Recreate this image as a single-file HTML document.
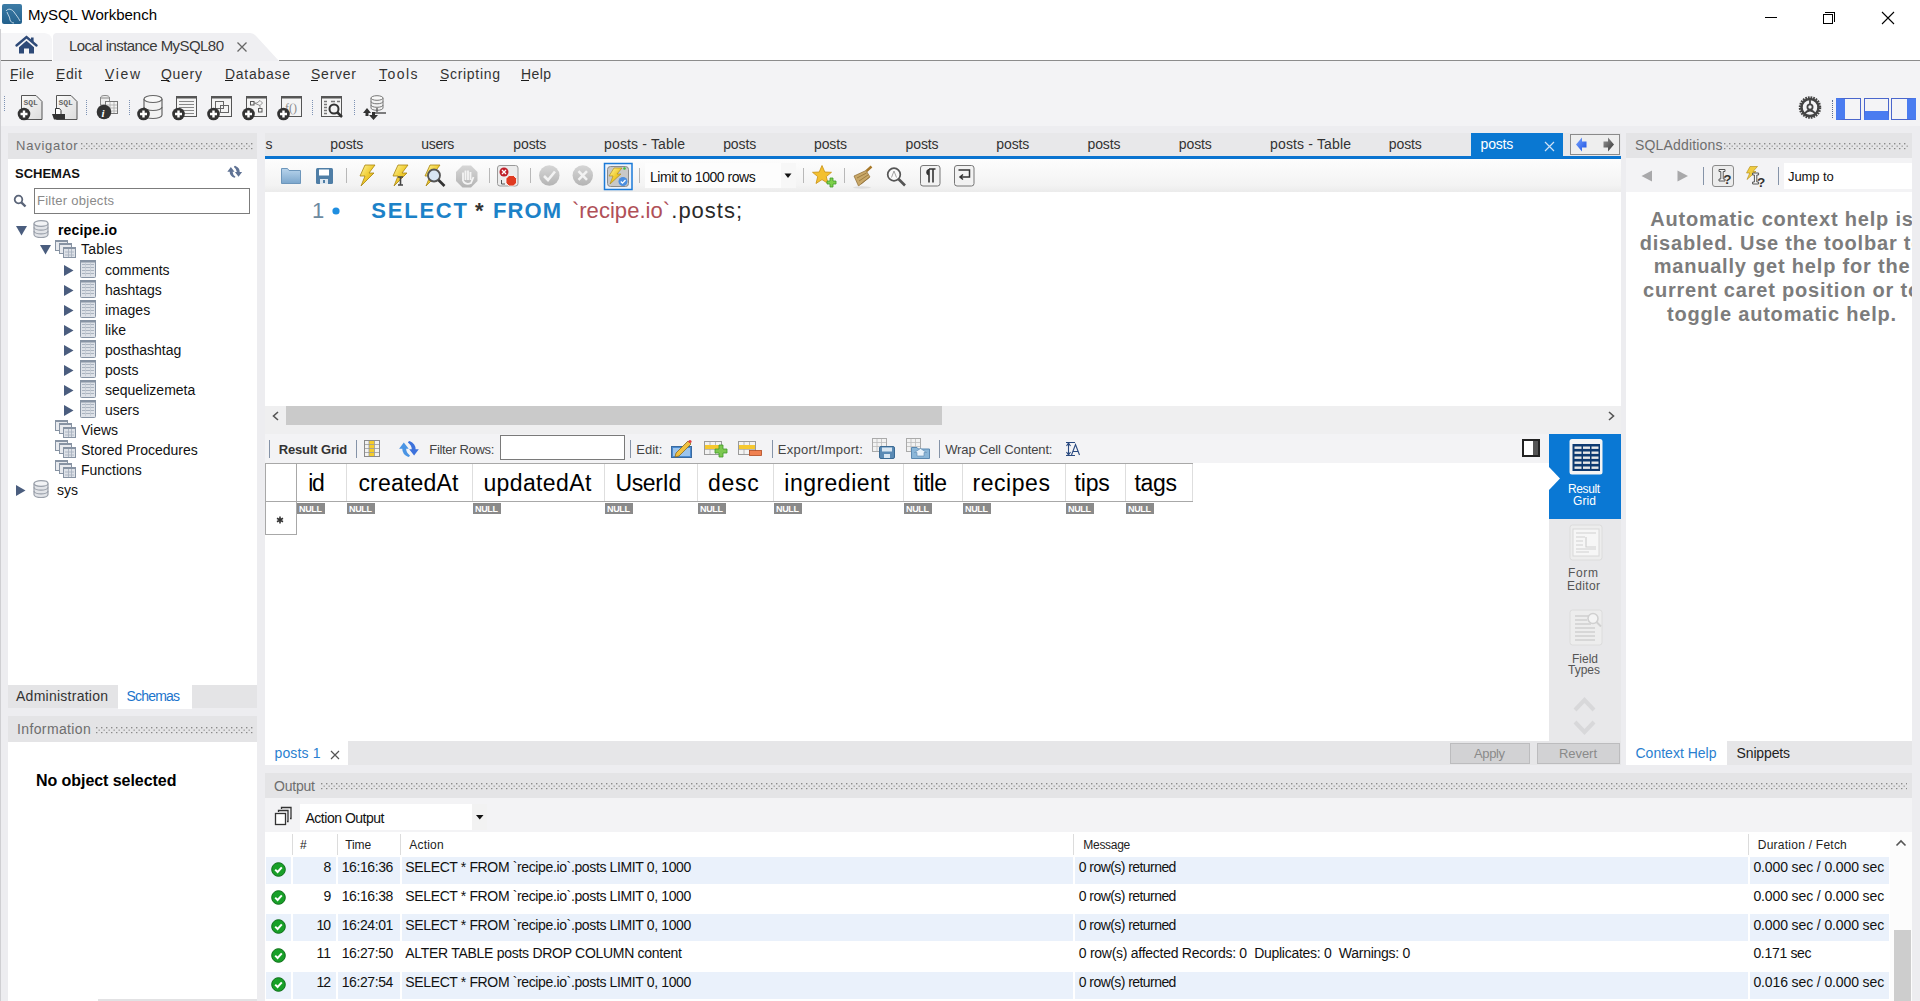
<!DOCTYPE html>
<html><head><meta charset="utf-8">
<style>
*{margin:0;padding:0;box-sizing:border-box}
html,body{width:1920px;height:1001px;overflow:hidden;background:#ededf0;font-family:"Liberation Sans",sans-serif;color:#000;position:relative}
.a{position:absolute}
.t{position:absolute;white-space:nowrap;line-height:1}
svg{position:absolute;overflow:visible}
</style></head><body>
<!-- title bar -->
<div class="a" style="left:0;top:0;width:1920px;height:61px;background:#fff"></div>
<svg class="a" style="left:2px;top:4px" width="21" height="21" viewBox="0 0 21 21"><defs><linearGradient id="lg1" x1="0" y1="0" x2="0" y2="1"><stop offset="0" stop-color="#3d7ca6"/><stop offset="1" stop-color="#23618d"/></linearGradient></defs><rect x="0" y="0" width="20" height="20" rx="2" fill="url(#lg1)"/><path d="M4 7 C6 4 10 5 12 8 C14 11 16 13 18 17 M5 8 C6 11 8 13 8 16 C9 18 10 19 12 19" stroke="#cfe0ec" stroke-width="0.9" fill="none"/></svg>
<div class="a" style="left:1765px;top:17px;width:12px;height:1px;background:#000"></div>
<div class="a" style="left:1823px;top:14px;width:10px;height:10px;border:1px solid #000"></div>
<div class="a" style="left:1825px;top:12px;width:10px;height:10px;border-top:1px solid #000;border-right:1px solid #000"></div>
<svg class="a" style="left:1881px;top:11px" width="14" height="14" viewBox="0 0 14 14"><path d="M1 1L13 13M13 1L1 13" stroke="#000" stroke-width="1.1"/></svg>
<!-- tab row -->
<svg class="a" style="left:0;top:33px" width="290" height="28"><path d="M0 0 H44 Q50 0 52 6 L52 27 H0Z" fill="#f5f5f7"/><path d="M53 28 V4 Q53 0 57 0 H250 Q254 0 257 4 L279 28Z" fill="#efeff2"/></svg>
<svg class="a" style="left:15px;top:35px" width="23" height="20" viewBox="0 0 23 20"><path d="M1.5 10.5L11.5 2L21.5 10.5" fill="none" stroke="#2e4a78" stroke-width="2.4" stroke-linecap="round"/><rect x="16" y="2.5" width="2.6" height="4.5" fill="#2e4a78"/><path d="M4 12.2L11.5 5.8L19 12.2V18.5H14V13.5H9V18.5H4Z" fill="#2e4a78"/></svg>
<svg class="a" style="left:236px;top:41px" width="12" height="12" viewBox="0 0 12 12"><path d="M1.5 1.5L10.5 10.5M10.5 1.5L1.5 10.5" stroke="#666" stroke-width="1.3"/></svg>
<div class="a" style="left:0;top:60px;width:52px;height:1px;background:#7a7a7a"></div>
<div class="a" style="left:279px;top:60px;width:1641px;height:1px;background:#8c8c8c"></div>
<!-- menu -->
<div class="a" style="left:0;top:61px;width:1920px;height:65px;background:#f3f3f5"></div>
<!-- toolbar -->
<svg class="a" style="left:0;top:88px" width="400" height="38" viewBox="0 0 400 38">
 <defs><linearGradient id="docg" x1="0" y1="0" x2="1" y2="1"><stop offset="0" stop-color="#fafafa"/><stop offset="1" stop-color="#dcdcdc"/></linearGradient>
 <g id="plus"><circle cx="0" cy="0" r="6.3" fill="#333"/><path d="M-3.5 0H3.5M0 -3.5V3.5" stroke="#fff" stroke-width="2.4"/></g></defs>
 <g fill="#7d92b4"><rect x="4" y="8" width="1" height="1"/><rect x="4" y="10" width="1" height="1"/><rect x="4" y="12" width="1" height="1"/><rect x="4" y="14" width="1" height="1"/><rect x="4" y="16" width="1" height="1"/><rect x="4" y="18" width="1" height="1"/><rect x="4" y="20" width="1" height="1"/><rect x="4" y="22" width="1" height="1"/></g>
 <path d="M21.5 7.5H36L42 13.5V31.5H21.5Z" fill="url(#docg)" stroke="#555" stroke-width="1"/>
 <text x="23.5" y="17" font-family="Liberation Mono" font-size="8" font-weight="bold" fill="#666">SQL</text>
 <g transform="translate(24 26)"><circle cx="0" cy="0" r="6.3" fill="#333"/><path d="M-3.5 0H3.5M0 -3.5V3.5" stroke="#fff" stroke-width="2.4"/></g>
 <path d="M56.5 7.5H71L77 13.5V31.5H56.5Z" fill="url(#docg)" stroke="#555" stroke-width="1"/>
 <text x="58.5" y="17" font-family="Liberation Mono" font-size="8" font-weight="bold" fill="#666">SQL</text>
 <path d="M55.5 20.5H59.5L61 22.5V27H55.5Z" fill="#fff" stroke="#333" stroke-width="1"/><path d="M52 26H65V31.5H54Z" fill="#333"/>
 <g fill="#7d92b4"><rect x="86" y="12" width="1" height="1"/><rect x="86" y="14" width="1" height="1"/><rect x="86" y="16" width="1" height="1"/><rect x="86" y="18" width="1" height="1"/><rect x="86" y="20" width="1" height="1"/><rect x="86" y="22" width="1" height="1"/><rect x="86" y="24" width="1" height="1"/><rect x="86" y="26" width="1" height="1"/></g>
 <ellipse cx="105" cy="10" rx="4.5" ry="2.5" fill="#eee" stroke="#888"/><rect x="100.5" y="10" width="9" height="7" fill="#eee" stroke="#888"/>
 <rect x="105.5" y="13.5" width="12" height="12" fill="#f4f4f4" stroke="#777"/><path d="M106 17H117M106 20H117M106 23H117M110 14V25M114 14V25" stroke="#aaa" stroke-width="0.8"/>
 <circle cx="104" cy="24" r="7.3" fill="#333"/><text x="101.5" y="29" font-family="Liberation Serif" font-style="italic" font-weight="bold" font-size="11" fill="#fff">i</text>
 <g fill="#7d92b4"><rect x="129" y="12" width="1" height="1"/><rect x="129" y="14" width="1" height="1"/><rect x="129" y="16" width="1" height="1"/><rect x="129" y="18" width="1" height="1"/><rect x="129" y="20" width="1" height="1"/><rect x="129" y="22" width="1" height="1"/><rect x="129" y="24" width="1" height="1"/><rect x="129" y="26" width="1" height="1"/></g>
 <path d="M144 11 V27 A9 3.5 0 0 0 162 27 V11" fill="#f2f2f2" stroke="#666" stroke-width="1.2"/><ellipse cx="153" cy="11" rx="9" ry="3.5" fill="#f8f8f8" stroke="#666" stroke-width="1.2"/><path d="M144 19 A9 3.5 0 0 0 162 19" fill="none" stroke="#666" stroke-width="1.2"/>
 <g transform="translate(143.5 26)"><circle cx="0" cy="0" r="6.3" fill="#333"/><path d="M-3.5 0H3.5M0 -3.5V3.5" stroke="#fff" stroke-width="2.4"/></g>
 <rect x="176.5" y="8.5" width="20" height="20" fill="#f4f4f4" stroke="#555"/><rect x="176" y="8" width="21" height="2.5" fill="#555"/><path d="M179 13.5H194M179 16.5H194M179 19.5H194M179 22.5H194M179 25.5H194" stroke="#888" stroke-width="1.2"/>
 <g transform="translate(178.5 26)"><circle cx="0" cy="0" r="6.3" fill="#333"/><path d="M-3.5 0H3.5M0 -3.5V3.5" stroke="#fff" stroke-width="2.4"/></g>
 <rect x="211.5" y="8.5" width="20" height="20" fill="#f4f4f4" stroke="#555"/><rect x="211" y="8" width="21" height="2.5" fill="#555"/><rect x="215.5" y="13.5" width="8" height="7" fill="none" stroke="#666"/><rect x="220.5" y="17.5" width="8" height="7" fill="none" stroke="#666"/>
 <g transform="translate(213.5 26)"><circle cx="0" cy="0" r="6.3" fill="#333"/><path d="M-3.5 0H3.5M0 -3.5V3.5" stroke="#fff" stroke-width="2.4"/></g>
 <rect x="246.5" y="8.5" width="20" height="20" fill="#f4f4f4" stroke="#555"/><rect x="246" y="8" width="21" height="2.5" fill="#555"/><rect x="250.5" y="13.5" width="3.5" height="3.5" fill="none" stroke="#555"/><rect x="258.5" y="20.5" width="3.5" height="3.5" fill="none" stroke="#555"/><path d="M254 15H257L260 12.5L262.5 15L260 17.5Z M260 17.5V20.5" fill="none" stroke="#777" stroke-width="0.8"/>
 <g transform="translate(248.5 26)"><circle cx="0" cy="0" r="6.3" fill="#333"/><path d="M-3.5 0H3.5M0 -3.5V3.5" stroke="#fff" stroke-width="2.4"/></g>
 <rect x="281.5" y="8.5" width="20" height="20" fill="#f4f4f4" stroke="#555"/><rect x="281" y="8" width="21" height="2.5" fill="#555"/><text x="285" y="24" font-family="Liberation Serif" font-size="12" fill="#888">f()</text>
 <g transform="translate(283.5 26)"><circle cx="0" cy="0" r="6.3" fill="#333"/><path d="M-3.5 0H3.5M0 -3.5V3.5" stroke="#fff" stroke-width="2.4"/></g>
 <g fill="#7d92b4"><rect x="312" y="12" width="1" height="1"/><rect x="312" y="14" width="1" height="1"/><rect x="312" y="16" width="1" height="1"/><rect x="312" y="18" width="1" height="1"/><rect x="312" y="20" width="1" height="1"/><rect x="312" y="22" width="1" height="1"/><rect x="312" y="24" width="1" height="1"/><rect x="312" y="26" width="1" height="1"/></g>
 <rect x="321.5" y="8.5" width="20" height="20" fill="#f4f4f4" stroke="#555"/><rect x="321" y="8" width="21" height="2.5" fill="#555"/><path d="M324 13.5H327M331 13.5H335M337 13.5H340M324 16.5H327M324 19.5H327M324 22.5H327M324 25.5H327" stroke="#777" stroke-width="1.3"/><circle cx="334" cy="21" r="4.5" fill="#f4f4f4" stroke="#333" stroke-width="2"/><path d="M337 24L342 29" stroke="#333" stroke-width="2.5"/>
 <g fill="#7d92b4"><rect x="354" y="12" width="1" height="1"/><rect x="354" y="14" width="1" height="1"/><rect x="354" y="16" width="1" height="1"/><rect x="354" y="18" width="1" height="1"/><rect x="354" y="20" width="1" height="1"/><rect x="354" y="22" width="1" height="1"/><rect x="354" y="24" width="1" height="1"/><rect x="354" y="26" width="1" height="1"/></g>
 <path d="M371 10 V20 A6 2.3 0 0 0 383 20 V10" fill="#f2f2f2" stroke="#777"/><ellipse cx="377" cy="10" rx="6" ry="2.3" fill="#f8f8f8" stroke="#777"/><path d="M371 13.5 A6 2.3 0 0 0 383 13.5 M371 17 A6 2.3 0 0 0 383 17" fill="none" stroke="#777"/>
 <path d="M377 20V24M372 25H386" stroke="#555" stroke-width="1.3"/>
 <path d="M363 25L367 20L371 25H368.5V28H365.5V25Z" fill="#333"/><path d="M369 27H372V24H375V27H378L373.5 32Z" fill="#333"/>
</svg>
<svg class="a" style="left:1795px;top:93px" width="30" height="30" viewBox="0 0 30 30">
 <circle cx="15" cy="14.5" r="9.5" fill="none" stroke="#444" stroke-width="3.5" stroke-dasharray="1.6 0.9"/><circle cx="15" cy="14.5" r="8.5" fill="none" stroke="#444" stroke-width="2.5"/>
 <circle cx="15" cy="14" r="2.6" fill="none" stroke="#444" stroke-width="1.8"/><path d="M15 6V11M9.5 20.5Q15 14.5 20.5 20.5" fill="none" stroke="#444" stroke-width="1.8"/>
</svg>
<div class="a" style="left:1832px;top:100px;width:1px;height:18px;border-left:1px dotted #5a6e90"></div>
<div class="a" style="left:1836px;top:98px;width:25px;height:22px;background:#f4f4f6;border:1px solid #4a66cc;border-left:9px solid #4a7cf0"></div>
<div class="a" style="left:1864px;top:98px;width:25px;height:22px;background:#f4f4f6;border:1px solid #4a66cc;border-bottom:9px solid #4a7cf0"></div>
<div class="a" style="left:1891px;top:98px;width:25px;height:22px;background:#f4f4f6;border:1px solid #4a66cc;border-right:9px solid #4a7cf0"></div>

<div class="t" style="left:28px;top:6.50px;font-size:15px;font-weight:400;color:#000;font-family:'Liberation Sans',sans-serif;letter-spacing:-0.016px;">MySQL Workbench</div>
<div class="t" style="left:69px;top:38.40px;font-size:15px;font-weight:400;color:#3a3a3a;font-family:'Liberation Sans',sans-serif;letter-spacing:-0.560px;">Local instance MySQL80</div>
<div class="t" style="left:10px;top:66.80px;font-size:14px;font-weight:400;color:#333;font-family:'Liberation Sans',sans-serif;letter-spacing:0.479px;">File</div>
<div class="a" style="left:10px;top:80px;width:7px;height:1px;background:#1a1a1a;"></div>
<div class="t" style="left:56px;top:66.80px;font-size:14px;font-weight:400;color:#333;font-family:'Liberation Sans',sans-serif;letter-spacing:0.625px;">Edit</div>
<div class="a" style="left:56px;top:80px;width:7px;height:1px;background:#1a1a1a;"></div>
<div class="t" style="left:105px;top:66.80px;font-size:14px;font-weight:400;color:#333;font-family:'Liberation Sans',sans-serif;letter-spacing:1.635px;">View</div>
<div class="a" style="left:105px;top:80px;width:8px;height:1px;background:#1a1a1a;"></div>
<div class="t" style="left:161px;top:66.80px;font-size:14px;font-weight:400;color:#333;font-family:'Liberation Sans',sans-serif;letter-spacing:0.719px;">Query</div>
<div class="a" style="left:161px;top:80px;width:8px;height:1px;background:#1a1a1a;"></div>
<div class="t" style="left:225px;top:66.80px;font-size:14px;font-weight:400;color:#333;font-family:'Liberation Sans',sans-serif;letter-spacing:0.723px;">Database</div>
<div class="a" style="left:225px;top:80px;width:8px;height:1px;background:#1a1a1a;"></div>
<div class="t" style="left:311px;top:66.80px;font-size:14px;font-weight:400;color:#333;font-family:'Liberation Sans',sans-serif;letter-spacing:0.753px;">Server</div>
<div class="a" style="left:311px;top:80px;width:7px;height:1px;background:#1a1a1a;"></div>
<div class="t" style="left:379px;top:66.80px;font-size:14px;font-weight:400;color:#333;font-family:'Liberation Sans',sans-serif;letter-spacing:1.453px;">Tools</div>
<div class="a" style="left:379px;top:80px;width:7px;height:1px;background:#1a1a1a;"></div>
<div class="t" style="left:440px;top:66.80px;font-size:14px;font-weight:400;color:#333;font-family:'Liberation Sans',sans-serif;letter-spacing:0.691px;">Scripting</div>
<div class="a" style="left:440px;top:80px;width:7px;height:1px;background:#1a1a1a;"></div>
<div class="t" style="left:521px;top:66.80px;font-size:14px;font-weight:400;color:#333;font-family:'Liberation Sans',sans-serif;letter-spacing:0.401px;">Help</div>
<div class="a" style="left:521px;top:80px;width:8px;height:1px;background:#1a1a1a;"></div>
<div class="a" style="left:0px;top:126px;width:1920px;height:875px;background:#ededf0;"></div>
<div class="a" style="left:0px;top:29px;width:1px;height:972px;background:#cfcfd2;"></div>
<div class="a" style="left:8px;top:133px;width:249px;height:26px;background:#e4e4e6;"></div>
<div class="t" style="left:16px;top:138.70px;font-size:13px;font-weight:400;color:#6e6e6e;font-family:'Liberation Sans',sans-serif;letter-spacing:0.757px;">Navigator</div>
<svg style="left:80.5px;top:143px" width="172" height="6.5"><defs><pattern id="dp1" width="5" height="5" patternUnits="userSpaceOnUse"><rect x="0" y="0" width="1.4" height="1.4" fill="#8a8a8a"/><rect x="2.5" y="2.5" width="1.4" height="1.4" fill="#a4a4a4"/></pattern></defs><rect width="172" height="6.5" fill="url(#dp1)"/></svg>
<div class="a" style="left:8px;top:159px;width:249px;height:526px;background:#fff;"></div>
<div class="t" style="left:15px;top:166.80px;font-size:13px;font-weight:700;color:#111;font-family:'Liberation Sans',sans-serif;letter-spacing:-0.003px;">SCHEMAS</div>
<svg style="left:227.3px;top:165.6px" width="15.2" height="12" viewBox="0 0 20 16"><path d="M0.3 7.5 L5 1.3 L9.9 7.5 L7.3 7.5 Q7.5 11.5 11.2 14.3 Q10.6 15.7 9.6 15.8 Q3.3 13 3.5 7.5 Z" fill="#5f7294"/><path d="M0.3 7.5 L5 1.3 L9.9 7.5 L7.3 7.5 Q7.5 11.5 11.2 14.3 Q10.6 15.7 9.6 15.8 Q3.3 13 3.5 7.5 Z" fill="#5f7294" transform="rotate(180 10.15 7.8)"/></svg>
<svg style="left:13px;top:194px" width="14" height="14" viewBox="0 0 14 14"><circle cx="5.5" cy="5.5" r="3.8" fill="none" stroke="#5a6478" stroke-width="1.8"/><path d="M8.3 8.3 L12.5 12.5" stroke="#5a6478" stroke-width="2.4"/></svg>
<div class="a" style="left:34px;top:188px;width:216px;height:26px;background:#fff;border:1px solid #7c7c7c"></div>
<div class="t" style="left:37px;top:194.00px;font-size:13px;font-weight:400;color:#8a8a8a;font-family:'Liberation Sans',sans-serif;letter-spacing:0.254px;">Filter objects</div>
<svg style="left:16px;top:225.5px" width="11" height="9.5" viewBox="0 0 11 9.5"><path d="M0 0H11L5.5 9.5Z" fill="#4a5d7e"/></svg>
<svg style="left:33px;top:220px" width="16" height="18" viewBox="0 0 16 18"><path d="M1 3.5V14.5A7 3 0 0 0 15 14.5V3.5" fill="#e2e4e8" stroke="#9aa0aa" stroke-width="1.2"/><ellipse cx="8" cy="3.5" rx="7" ry="2.8" fill="#f2f3f5" stroke="#9aa0aa" stroke-width="1.2"/><path d="M1 7.2A7 3 0 0 0 15 7.2M1 10.9A7 3 0 0 0 15 10.9" fill="none" stroke="#9aa0aa" stroke-width="1.2"/></svg>
<div class="t" style="left:58px;top:222.80px;font-size:14px;font-weight:700;color:#000;font-family:'Liberation Sans',sans-serif;letter-spacing:0.176px;">recipe.io</div>
<svg style="left:40px;top:245px" width="11" height="9.5" viewBox="0 0 11 9.5"><path d="M0 0H11L5.5 9.5Z" fill="#4a5d7e"/></svg>
<svg style="left:55px;top:240px" width="21" height="18" viewBox="0 0 21 18"><rect x="0.5" y="0.5" width="12" height="10" fill="#e8eaee" stroke="#8793a3"/><rect x="0" y="0" width="13" height="2" fill="#8793a3"/><rect x="4.5" y="3.5" width="12" height="10" fill="#e8eaee" stroke="#8793a3"/><rect x="4" y="3" width="13" height="2" fill="#8793a3"/><rect x="8.5" y="7.5" width="12" height="10" fill="#dde1e7" stroke="#8793a3"/><rect x="8" y="7" width="13" height="2" fill="#8793a3"/><path d="M10 12H19M10 15H19M13.5 9V17M16.5 9V17" stroke="#aab3bf" stroke-width="0.9"/></svg>
<div class="t" style="left:81px;top:242.40px;font-size:14px;font-weight:400;color:#111;font-family:'Liberation Sans',sans-serif;letter-spacing:0.226px;">Tables</div>
<svg style="left:64px;top:265px" width="9.5" height="11" viewBox="0 0 9.5 11"><path d="M0 0V11L9.5 5.5Z" fill="#4a5d7e"/></svg>
<svg style="left:80px;top:260px" width="16" height="18" viewBox="0 0 16 18"><rect x="0.5" y="0.5" width="15" height="17" rx="1" fill="#dde1e7" stroke="#8793a3"/><rect x="0" y="0" width="16" height="2.5" fill="#8793a3"/><path d="M2 4.5H14M2 7.5H14M2 10.5H14M2 13.5H14" stroke="#aab3bf" stroke-width="1.2"/><path d="M5.5 3V16M10.5 3V16" stroke="#c4cad3" stroke-width="0.8"/></svg>
<div class="t" style="left:105px;top:263.00px;font-size:14px;font-weight:400;color:#111;font-family:'Liberation Sans',sans-serif;">comments</div>
<svg style="left:64px;top:285px" width="9.5" height="11" viewBox="0 0 9.5 11"><path d="M0 0V11L9.5 5.5Z" fill="#4a5d7e"/></svg>
<svg style="left:80px;top:280px" width="16" height="18" viewBox="0 0 16 18"><rect x="0.5" y="0.5" width="15" height="17" rx="1" fill="#dde1e7" stroke="#8793a3"/><rect x="0" y="0" width="16" height="2.5" fill="#8793a3"/><path d="M2 4.5H14M2 7.5H14M2 10.5H14M2 13.5H14" stroke="#aab3bf" stroke-width="1.2"/><path d="M5.5 3V16M10.5 3V16" stroke="#c4cad3" stroke-width="0.8"/></svg>
<div class="t" style="left:105px;top:283.00px;font-size:14px;font-weight:400;color:#111;font-family:'Liberation Sans',sans-serif;">hashtags</div>
<svg style="left:64px;top:305px" width="9.5" height="11" viewBox="0 0 9.5 11"><path d="M0 0V11L9.5 5.5Z" fill="#4a5d7e"/></svg>
<svg style="left:80px;top:300px" width="16" height="18" viewBox="0 0 16 18"><rect x="0.5" y="0.5" width="15" height="17" rx="1" fill="#dde1e7" stroke="#8793a3"/><rect x="0" y="0" width="16" height="2.5" fill="#8793a3"/><path d="M2 4.5H14M2 7.5H14M2 10.5H14M2 13.5H14" stroke="#aab3bf" stroke-width="1.2"/><path d="M5.5 3V16M10.5 3V16" stroke="#c4cad3" stroke-width="0.8"/></svg>
<div class="t" style="left:105px;top:303.00px;font-size:14px;font-weight:400;color:#111;font-family:'Liberation Sans',sans-serif;">images</div>
<svg style="left:64px;top:325px" width="9.5" height="11" viewBox="0 0 9.5 11"><path d="M0 0V11L9.5 5.5Z" fill="#4a5d7e"/></svg>
<svg style="left:80px;top:320px" width="16" height="18" viewBox="0 0 16 18"><rect x="0.5" y="0.5" width="15" height="17" rx="1" fill="#dde1e7" stroke="#8793a3"/><rect x="0" y="0" width="16" height="2.5" fill="#8793a3"/><path d="M2 4.5H14M2 7.5H14M2 10.5H14M2 13.5H14" stroke="#aab3bf" stroke-width="1.2"/><path d="M5.5 3V16M10.5 3V16" stroke="#c4cad3" stroke-width="0.8"/></svg>
<div class="t" style="left:105px;top:323.00px;font-size:14px;font-weight:400;color:#111;font-family:'Liberation Sans',sans-serif;">like</div>
<svg style="left:64px;top:345px" width="9.5" height="11" viewBox="0 0 9.5 11"><path d="M0 0V11L9.5 5.5Z" fill="#4a5d7e"/></svg>
<svg style="left:80px;top:340px" width="16" height="18" viewBox="0 0 16 18"><rect x="0.5" y="0.5" width="15" height="17" rx="1" fill="#dde1e7" stroke="#8793a3"/><rect x="0" y="0" width="16" height="2.5" fill="#8793a3"/><path d="M2 4.5H14M2 7.5H14M2 10.5H14M2 13.5H14" stroke="#aab3bf" stroke-width="1.2"/><path d="M5.5 3V16M10.5 3V16" stroke="#c4cad3" stroke-width="0.8"/></svg>
<div class="t" style="left:105px;top:343.00px;font-size:14px;font-weight:400;color:#111;font-family:'Liberation Sans',sans-serif;">posthashtag</div>
<svg style="left:64px;top:365px" width="9.5" height="11" viewBox="0 0 9.5 11"><path d="M0 0V11L9.5 5.5Z" fill="#4a5d7e"/></svg>
<svg style="left:80px;top:360px" width="16" height="18" viewBox="0 0 16 18"><rect x="0.5" y="0.5" width="15" height="17" rx="1" fill="#dde1e7" stroke="#8793a3"/><rect x="0" y="0" width="16" height="2.5" fill="#8793a3"/><path d="M2 4.5H14M2 7.5H14M2 10.5H14M2 13.5H14" stroke="#aab3bf" stroke-width="1.2"/><path d="M5.5 3V16M10.5 3V16" stroke="#c4cad3" stroke-width="0.8"/></svg>
<div class="t" style="left:105px;top:363.00px;font-size:14px;font-weight:400;color:#111;font-family:'Liberation Sans',sans-serif;">posts</div>
<svg style="left:64px;top:385px" width="9.5" height="11" viewBox="0 0 9.5 11"><path d="M0 0V11L9.5 5.5Z" fill="#4a5d7e"/></svg>
<svg style="left:80px;top:380px" width="16" height="18" viewBox="0 0 16 18"><rect x="0.5" y="0.5" width="15" height="17" rx="1" fill="#dde1e7" stroke="#8793a3"/><rect x="0" y="0" width="16" height="2.5" fill="#8793a3"/><path d="M2 4.5H14M2 7.5H14M2 10.5H14M2 13.5H14" stroke="#aab3bf" stroke-width="1.2"/><path d="M5.5 3V16M10.5 3V16" stroke="#c4cad3" stroke-width="0.8"/></svg>
<div class="t" style="left:105px;top:383.00px;font-size:14px;font-weight:400;color:#111;font-family:'Liberation Sans',sans-serif;">sequelizemeta</div>
<svg style="left:64px;top:405px" width="9.5" height="11" viewBox="0 0 9.5 11"><path d="M0 0V11L9.5 5.5Z" fill="#4a5d7e"/></svg>
<svg style="left:80px;top:400px" width="16" height="18" viewBox="0 0 16 18"><rect x="0.5" y="0.5" width="15" height="17" rx="1" fill="#dde1e7" stroke="#8793a3"/><rect x="0" y="0" width="16" height="2.5" fill="#8793a3"/><path d="M2 4.5H14M2 7.5H14M2 10.5H14M2 13.5H14" stroke="#aab3bf" stroke-width="1.2"/><path d="M5.5 3V16M10.5 3V16" stroke="#c4cad3" stroke-width="0.8"/></svg>
<div class="t" style="left:105px;top:403.00px;font-size:14px;font-weight:400;color:#111;font-family:'Liberation Sans',sans-serif;">users</div>
<svg style="left:55px;top:420px" width="21" height="18" viewBox="0 0 21 18"><rect x="0.5" y="0.5" width="12" height="10" fill="#e8eaee" stroke="#8793a3"/><rect x="0" y="0" width="13" height="2" fill="#8793a3"/><rect x="4.5" y="3.5" width="12" height="10" fill="#e8eaee" stroke="#8793a3"/><rect x="4" y="3" width="13" height="2" fill="#8793a3"/><rect x="8.5" y="7.5" width="12" height="10" fill="#dde1e7" stroke="#8793a3"/><rect x="8" y="7" width="13" height="2" fill="#8793a3"/><path d="M10 12H19M10 15H19M13.5 9V17M16.5 9V17" stroke="#aab3bf" stroke-width="0.9"/></svg>
<div class="t" style="left:81px;top:423.00px;font-size:14px;font-weight:400;color:#111;font-family:'Liberation Sans',sans-serif;">Views</div>
<svg style="left:55px;top:440px" width="21" height="18" viewBox="0 0 21 18"><rect x="0.5" y="0.5" width="12" height="10" fill="#e8eaee" stroke="#8793a3"/><rect x="0" y="0" width="13" height="2" fill="#8793a3"/><rect x="4.5" y="3.5" width="12" height="10" fill="#e8eaee" stroke="#8793a3"/><rect x="4" y="3" width="13" height="2" fill="#8793a3"/><rect x="8.5" y="7.5" width="12" height="10" fill="#dde1e7" stroke="#8793a3"/><rect x="8" y="7" width="13" height="2" fill="#8793a3"/><path d="M10 12H19M10 15H19M13.5 9V17M16.5 9V17" stroke="#aab3bf" stroke-width="0.9"/></svg>
<div class="t" style="left:81px;top:443.00px;font-size:14px;font-weight:400;color:#111;font-family:'Liberation Sans',sans-serif;">Stored Procedures</div>
<svg style="left:55px;top:460px" width="21" height="18" viewBox="0 0 21 18"><rect x="0.5" y="0.5" width="12" height="10" fill="#e8eaee" stroke="#8793a3"/><rect x="0" y="0" width="13" height="2" fill="#8793a3"/><rect x="4.5" y="3.5" width="12" height="10" fill="#e8eaee" stroke="#8793a3"/><rect x="4" y="3" width="13" height="2" fill="#8793a3"/><rect x="8.5" y="7.5" width="12" height="10" fill="#dde1e7" stroke="#8793a3"/><rect x="8" y="7" width="13" height="2" fill="#8793a3"/><path d="M10 12H19M10 15H19M13.5 9V17M16.5 9V17" stroke="#aab3bf" stroke-width="0.9"/></svg>
<div class="t" style="left:81px;top:463.00px;font-size:14px;font-weight:400;color:#111;font-family:'Liberation Sans',sans-serif;">Functions</div>
<svg style="left:16px;top:485px" width="9.5" height="11" viewBox="0 0 9.5 11"><path d="M0 0V11L9.5 5.5Z" fill="#4a5d7e"/></svg>
<svg style="left:33px;top:480px" width="16" height="18" viewBox="0 0 16 18"><path d="M1 3.5V14.5A7 3 0 0 0 15 14.5V3.5" fill="#e2e4e8" stroke="#9aa0aa" stroke-width="1.2"/><ellipse cx="8" cy="3.5" rx="7" ry="2.8" fill="#f2f3f5" stroke="#9aa0aa" stroke-width="1.2"/><path d="M1 7.2A7 3 0 0 0 15 7.2M1 10.9A7 3 0 0 0 15 10.9" fill="none" stroke="#9aa0aa" stroke-width="1.2"/></svg>
<div class="t" style="left:57px;top:483.00px;font-size:14px;font-weight:400;color:#111;font-family:'Liberation Sans',sans-serif;">sys</div>
<div class="a" style="left:8px;top:685px;width:249px;height:23px;background:#e4e4e6;"></div>
<div class="a" style="left:118px;top:685px;width:74px;height:24px;background:#fff;"></div>
<div class="t" style="left:16px;top:689.00px;font-size:14px;font-weight:400;color:#333;font-family:'Liberation Sans',sans-serif;letter-spacing:0.254px;">Administration</div>
<div class="t" style="left:126.6px;top:689.00px;font-size:14px;font-weight:400;color:#1a74cc;font-family:'Liberation Sans',sans-serif;letter-spacing:-0.810px;">Schemas</div>
<div class="a" style="left:8px;top:716px;width:249px;height:26px;background:#e4e4e6;"></div>
<div class="t" style="left:17px;top:721.50px;font-size:14px;font-weight:400;color:#6e6e6e;font-family:'Liberation Sans',sans-serif;letter-spacing:0.375px;">Information</div>
<svg style="left:95.5px;top:726.5px" width="157" height="6.5"><defs><pattern id="dp2" width="5" height="5" patternUnits="userSpaceOnUse"><rect x="0" y="0" width="1.4" height="1.4" fill="#8a8a8a"/><rect x="2.5" y="2.5" width="1.4" height="1.4" fill="#a4a4a4"/></pattern></defs><rect width="157" height="6.5" fill="url(#dp2)"/></svg>
<div class="a" style="left:8px;top:742px;width:249px;height:259px;background:#fff;"></div>
<div class="t" style="left:36px;top:772.50px;font-size:16px;font-weight:700;color:#000;font-family:'Liberation Sans',sans-serif;letter-spacing:-0.057px;">No object selected</div>
<div class="a" style="left:98px;top:999px;width:159px;height:2px;background:#e2e2e4;"></div>
<div class="a" style="left:265px;top:133px;width:1356px;height:23px;background:#e8e8ea;"></div>
<div class="a" style="left:265px;top:156px;width:1356px;height:3px;background:#0a74d0;"></div>
<div class="t" style="left:265.6px;top:136.80px;font-size:14px;font-weight:400;color:#333;font-family:'Liberation Sans',sans-serif;">s</div>
<div class="t" style="left:330.3px;top:136.80px;font-size:14px;font-weight:400;color:#333;font-family:'Liberation Sans',sans-serif;letter-spacing:-0.117px;">posts</div>
<div class="t" style="left:421.3px;top:136.80px;font-size:14px;font-weight:400;color:#333;font-family:'Liberation Sans',sans-serif;letter-spacing:-0.309px;">users</div>
<div class="t" style="left:513.3px;top:136.80px;font-size:14px;font-weight:400;color:#333;font-family:'Liberation Sans',sans-serif;letter-spacing:-0.117px;">posts</div>
<div class="t" style="left:604px;top:136.80px;font-size:14px;font-weight:400;color:#333;font-family:'Liberation Sans',sans-serif;letter-spacing:0.156px;">posts - Table</div>
<div class="t" style="left:723.2px;top:136.80px;font-size:14px;font-weight:400;color:#333;font-family:'Liberation Sans',sans-serif;letter-spacing:-0.117px;">posts</div>
<div class="t" style="left:814px;top:136.80px;font-size:14px;font-weight:400;color:#333;font-family:'Liberation Sans',sans-serif;letter-spacing:-0.117px;">posts</div>
<div class="t" style="left:905.6px;top:136.80px;font-size:14px;font-weight:400;color:#333;font-family:'Liberation Sans',sans-serif;letter-spacing:-0.117px;">posts</div>
<div class="t" style="left:996.3px;top:136.80px;font-size:14px;font-weight:400;color:#333;font-family:'Liberation Sans',sans-serif;letter-spacing:-0.117px;">posts</div>
<div class="t" style="left:1087.5px;top:136.80px;font-size:14px;font-weight:400;color:#333;font-family:'Liberation Sans',sans-serif;letter-spacing:-0.117px;">posts</div>
<div class="t" style="left:1178.8px;top:136.80px;font-size:14px;font-weight:400;color:#333;font-family:'Liberation Sans',sans-serif;letter-spacing:-0.117px;">posts</div>
<div class="t" style="left:1270px;top:136.80px;font-size:14px;font-weight:400;color:#333;font-family:'Liberation Sans',sans-serif;letter-spacing:0.156px;">posts - Table</div>
<div class="t" style="left:1388.8px;top:136.80px;font-size:14px;font-weight:400;color:#333;font-family:'Liberation Sans',sans-serif;letter-spacing:-0.117px;">posts</div>
<div class="a" style="left:1471px;top:133px;width:92px;height:25px;background:#0a78d2;"></div>
<div class="t" style="left:1480.6px;top:136.60px;font-size:14px;font-weight:400;color:#fff;font-family:'Liberation Sans',sans-serif;letter-spacing:-0.217px;">posts</div>
<svg style="left:1544px;top:140.5px" width="11" height="11" viewBox="0 0 11 11"><path d="M1 1L10 10M10 1L1 10" stroke="#cfe2f6" stroke-width="1.2"/></svg>
<div class="a" style="left:1570px;top:134px;width:50px;height:21px;background:#eeeeee;border:1px solid #8a8a8a"></div>
<svg style="left:1576px;top:137px" width="12" height="15" viewBox="0 0 12 15"><defs><linearGradient id="ab" x1="0" y1="0" x2="1" y2="1"><stop offset="0" stop-color="#7aa6ff"/><stop offset="1" stop-color="#1a4fe0"/></linearGradient></defs><path d="M0 7.5L6 0.5V4.5H10.5V10.5H6V14.5Z" fill="url(#ab)"/></svg>
<svg style="left:1603px;top:137px" width="12" height="15" viewBox="0 0 12 15"><defs><linearGradient id="ag" x1="0" y1="0" x2="1" y2="1"><stop offset="0" stop-color="#999"/><stop offset="1" stop-color="#333"/></linearGradient></defs><path d="M11 7.5L5 0.5V4.5H0.5V10.5H5V14.5Z" fill="url(#ag)"/></svg>
<div class="a" style="left:265px;top:159px;width:1356px;height:33px;background:linear-gradient(#fdfdfd,#f3f3f3 80%,#ebebeb);"></div>
<svg style="left:265px;top:159px" width="740" height="33" viewBox="265 159 740 33">
 <defs>
  <linearGradient id="fold" x1="0" y1="0" x2="0" y2="1"><stop offset="0" stop-color="#b8d4ec"/><stop offset="1" stop-color="#7ba6cc"/></linearGradient>
  <linearGradient id="bolt" x1="0" y1="0" x2="1" y2="1"><stop offset="0" stop-color="#fff6a0"/><stop offset="0.5" stop-color="#f0cc30"/><stop offset="1" stop-color="#c89a10"/></linearGradient>
  <linearGradient id="grayc" x1="0" y1="0" x2="0" y2="1"><stop offset="0" stop-color="#d6d6d6"/><stop offset="1" stop-color="#b4b4b4"/></linearGradient>
  <g id="boltg"><path d="M8 0H18L12 8H17L4 21L8 11H3Z" fill="url(#bolt)" stroke="#a88410" stroke-width="0.8"/></g>
 </defs>
 <path d="M281.5 168.5H287.5L289 170.5H300.5V183.5H281.5Z" fill="url(#fold)" stroke="#6d96bb"/>
 <rect x="316" y="168" width="17" height="16" rx="1.5" fill="#4f7ea6"/><rect x="319" y="169.5" width="10" height="6" fill="#fff"/><rect x="320" y="179" width="8" height="5" fill="#dfe8f0"/><rect x="323" y="180" width="2" height="3" fill="#4f7ea6"/>
 <rect x="346" y="168" width="1" height="15" fill="#b8b8b8"/>
 <g transform="translate(357 165)"><path d="M8 0H18L12 8H17L4 21L8 11H3Z" fill="url(#bolt)" stroke="#a88410" stroke-width="0.8"/></g>
 <g transform="translate(390 165)"><path d="M8 0H18L12 8H17L4 21L8 11H3Z" fill="url(#bolt)" stroke="#a88410" stroke-width="0.8"/></g><path d="M400.5 177V185M398 177H403M398 185H403" stroke="#444" stroke-width="1.6"/>
 <g transform="translate(422 165)"><path d="M8 0H18L12 8H17L4 21L8 11H3Z" fill="url(#bolt)" stroke="#a88410" stroke-width="0.8"/></g><circle cx="434" cy="175.5" r="6" fill="#d8e6f4" stroke="#555" stroke-width="1.8"/><path d="M438.5 180L444.5 186" stroke="#333" stroke-width="2.6"/>
 <path d="M462.5 165.5H471L477.5 172V181L471 187.5H462.5L456 181V172Z" fill="url(#grayc)"/><path d="M463 181V172.5M465.5 180V170.5M468 180V170.5M470.5 180V172M463 181Q466 185.5 471 183L473.5 177" fill="none" stroke="#f4f4f4" stroke-width="1.8"/>
 <rect x="489" y="168" width="1" height="15" fill="#b8b8b8"/>
 <rect x="497.5" y="165.5" width="20.5" height="20.5" rx="2.5" fill="#ececec" stroke="#9a9a9a"/><circle cx="504" cy="172" r="4.5" fill="#c0202a"/><path d="M502 170L506 174M506 170L502 174" stroke="#fff" stroke-width="1.3"/><path d="M509 175.5H513.5L516.5 178.5V183L513.5 186H509L506 183V178.5Z" fill="#e03a20" stroke="#fff" stroke-width="0.8"/><path d="M501.5 180V184H505" fill="none" stroke="#555"/>
 <rect x="530" y="168" width="1" height="15" fill="#b8b8b8"/>
 <circle cx="549.3" cy="175.5" r="10.2" fill="url(#grayc)"/><path d="M544 176L548 180L555 171.5" fill="none" stroke="#f2f2f2" stroke-width="2.6"/>
 <circle cx="582.8" cy="175.5" r="10.2" fill="url(#grayc)"/><path d="M578.5 171.2L587 179.8M587 171.2L578.5 179.8" stroke="#f2f2f2" stroke-width="2.6"/>
 <rect x="604.5" y="163.5" width="27.5" height="26" fill="#eef3fa" stroke="#1a7ad8" stroke-width="1.5"/>
 <rect x="607.5" y="166.5" width="21" height="20" rx="3" fill="#c8c8c8" stroke="#8a8a8a"/>
 <path d="M614 168H622L617 174H621L610 184L613 176H609Z" fill="url(#bolt)" stroke="#a88410" stroke-width="0.6"/><circle cx="623" cy="181.5" r="4.5" fill="#4a8ee0"/><path d="M620.8 181.5L622.5 183.2L625.5 180" fill="none" stroke="#fff" stroke-width="1.2"/><circle cx="624.5" cy="168.5" r="1.3" fill="#3cc03c"/>
 <rect x="639" y="168" width="1" height="15" fill="#b8b8b8"/>
 <rect x="645" y="163" width="151" height="25" fill="#fdfdfd"/><rect x="781" y="163" width="15" height="25" fill="#f7f7f7"/>
 <path d="M784.5 173.5H791.5L788 178Z" fill="#111"/>
 <rect x="803" y="168" width="1" height="15" fill="#b8b8b8"/>
 <path d="M822 165.5L824.8 172L831.5 172.3L826.3 176.6L828 183.5L822 179.6L816 183.5L817.7 176.6L812.5 172.3L819.2 172Z" fill="#f3c030" stroke="#c89010" stroke-width="0.8"/>
 <path d="M827 181H830V178H833V181H836V184H833V187H830V184H827Z" fill="#7cd04a" stroke="#3f9a2a" stroke-width="0.8"/>
 <rect x="844" y="168" width="1" height="15" fill="#b8b8b8"/>
 <path d="M854 176L866 170.5L870 177L858.5 186Z" fill="#c9a868" stroke="#8d6a30" stroke-width="0.7"/><path d="M857 178L866.5 173M859 181L868 175M861 184L869 177.5" stroke="#8d6a30" stroke-width="0.7"/><path d="M866.5 171L871.5 166.5" stroke="#a87828" stroke-width="2.4"/>
 <ellipse cx="862" cy="187.5" rx="9" ry="1.2" fill="#ddd"/>
 <circle cx="894" cy="174.5" r="6.3" fill="#fafafa" stroke="#555" stroke-width="1.7"/><path d="M891.5 177.5L894 171L896.5 177.5" fill="none" stroke="#999" stroke-width="0.9"/><path d="M898.5 179L905 185.5" stroke="#555" stroke-width="2.6"/>
 <rect x="920.5" y="165.5" width="19.5" height="20.5" rx="2.5" fill="#f2f2f2" stroke="#777"/><path d="M929 169H935.5M929 169V182.5M933 169V182.5" stroke="#333" stroke-width="1.6"/><path d="M929 169A3.3 3.3 0 0 0 929 175.5Z" fill="#333"/>
 <rect x="954.5" y="165.5" width="19.5" height="20.5" rx="2.5" fill="#f2f2f2" stroke="#777"/><path d="M958.5 170H969.5V177H960.5M963 174.5L960 177L963 179.5M958.5 170" fill="none" stroke="#333" stroke-width="1.5"/>
</svg>
<div class="t" style="left:650px;top:169.50px;font-size:14px;font-weight:400;color:#111;font-family:'Liberation Sans',sans-serif;letter-spacing:-0.465px;">Limit to 1000 rows</div>
<div class="a" style="left:265px;top:192px;width:1356px;height:214px;background:#fff;"></div>
<div class="t" style="left:312px;top:200.00px;font-size:22px;font-weight:400;color:#6d8aa0;font-family:'Liberation Sans',sans-serif;">1</div>
<svg style="left:332px;top:207px" width="8" height="8" viewBox="0 0 8 8"><circle cx="4" cy="4" r="3.6" fill="#1f8ee0"/></svg>
<div class="t" style="left:371.2px;top:200.00px;font-size:22px;font-weight:700;color:#1c82c8;font-family:'Liberation Sans',sans-serif;letter-spacing:1.801px;">SELECT</div>
<div class="t" style="left:474.9px;top:200.00px;font-size:22px;font-weight:700;color:#333;font-family:'Liberation Sans',sans-serif;">*</div>
<div class="t" style="left:492.9px;top:200.00px;font-size:22px;font-weight:700;color:#1c82c8;font-family:'Liberation Sans',sans-serif;letter-spacing:1.145px;">FROM</div>
<div class="t" style="left:571.9px;top:200.00px;font-size:22px;font-weight:400;color:#b05058;font-family:'Liberation Sans',sans-serif;letter-spacing:0.039px;">`recipe.io`</div>
<div class="t" style="left:671.3px;top:200.00px;font-size:22px;font-weight:400;color:#2a2a2a;font-family:'Liberation Sans',sans-serif;letter-spacing:0.981px;">.posts;</div>
<div class="a" style="left:265px;top:406px;width:1356px;height:28px;background:#efeff0;"></div>
<div class="a" style="left:286px;top:406px;width:656px;height:19px;background:#cacaca;"></div>
<svg style="left:271px;top:411px" width="9" height="10" viewBox="0 0 9 10"><path d="M7 1L2.5 5L7 9" fill="none" stroke="#555" stroke-width="1.6"/></svg>
<svg style="left:1607px;top:411px" width="9" height="10" viewBox="0 0 9 10"><path d="M2 1L6.5 5L2 9" fill="none" stroke="#555" stroke-width="1.6"/></svg>
<div class="a" style="left:265px;top:434px;width:1284px;height:29px;background:#f3f3f5;"></div>
<div class="a" style="left:269px;top:440px;width:1px;height:18px;background:#8593a8;"></div>
<div class="a" style="left:355.6px;top:440px;width:1px;height:18px;background:#8593a8;"></div>
<div class="a" style="left:630.3px;top:440px;width:1px;height:18px;background:#8593a8;"></div>
<div class="a" style="left:771.8px;top:440px;width:1px;height:18px;background:#8593a8;"></div>
<div class="a" style="left:939.2px;top:440px;width:1px;height:18px;background:#8593a8;"></div>
<div class="t" style="left:278.75px;top:443.20px;font-size:13px;font-weight:700;color:#333;font-family:'Liberation Sans',sans-serif;letter-spacing:-0.158px;">Result Grid</div>
<div class="t" style="left:429.3px;top:443.20px;font-size:13px;font-weight:400;color:#444;font-family:'Liberation Sans',sans-serif;letter-spacing:-0.330px;">Filter Rows:</div>
<div class="a" style="left:500px;top:435px;width:125px;height:25px;background:#fff;border:1px solid #7a7a7a"></div>
<div class="t" style="left:636.3px;top:443.20px;font-size:13px;font-weight:400;color:#444;font-family:'Liberation Sans',sans-serif;letter-spacing:-0.004px;">Edit:</div>
<div class="t" style="left:777.8px;top:443.20px;font-size:13px;font-weight:400;color:#444;font-family:'Liberation Sans',sans-serif;letter-spacing:0.258px;">Export/Import:</div>
<div class="t" style="left:945.2px;top:443.20px;font-size:13px;font-weight:400;color:#444;font-family:'Liberation Sans',sans-serif;letter-spacing:-0.135px;">Wrap Cell Content:</div>
<svg style="left:360px;top:434px" width="740" height="29" viewBox="360 434 740 29">
 <rect x="364.5" y="440.5" width="15" height="16" fill="#f2f2f2" stroke="#8a8a8a"/><rect x="369" y="441" width="5.5" height="15" fill="#f5cc2a"/><path d="M365 444.5H379M365 448.5H379M365 452.5H379M369 441V456M374.5 441V456" stroke="#9a9a9a" stroke-width="0.8"/>
 <g transform="translate(398.8 441.2)"><path d="M0.3 7.5 L5 1.3 L9.9 7.5 L7.3 7.5 Q7.5 11.5 11.2 14.3 Q10.6 15.7 9.6 15.8 Q3.3 13 3.5 7.5 Z" fill="#4a94e4"/><path d="M0.3 7.5 L5 1.3 L9.9 7.5 L7.3 7.5 Q7.5 11.5 11.2 14.3 Q10.6 15.7 9.6 15.8 Q3.3 13 3.5 7.5 Z" fill="#3d72dc" transform="rotate(180 10.15 7.8)"/></g>
 <rect x="671.5" y="446.5" width="20" height="11" fill="#4a8ad0" stroke="#3a6aa0"/><rect x="673" y="448" width="17" height="8" fill="#9cc4ec"/><path d="M676 453L688 441L691 444L679 456L675 457Z" fill="#f0c040" stroke="#8a6a20" stroke-width="0.8"/><circle cx="690" cy="441.5" r="1.6" fill="#e04040"/>
 <g><rect x="704.5" y="441.5" width="17" height="13" fill="#f2f2f2" stroke="#9a9a9a"/><path d="M705 445.5H721M705 449.5H721M710 442V454M715.5 442V454" stroke="#aaa" stroke-width="0.8"/><rect x="705" y="445" width="16" height="4" fill="#f5c830"/><path d="M719 449H723V453H727V457H723V461H719V457H715V453H719Z" fill="#7cc850" stroke="#3f9a2a" stroke-width="0.8" transform="translate(0,-4) scale(1)"/></g>
 <g><rect x="738.5" y="441.5" width="17" height="13" fill="#f2f2f2" stroke="#9a9a9a"/><path d="M739 445.5H755M739 449.5H755M744 442V454M749.5 442V454" stroke="#aaa" stroke-width="0.8"/><rect x="739" y="445" width="16" height="4" fill="#f5c830"/><rect x="749.5" y="450.5" width="12" height="5" fill="#f08050" stroke="#b04a20" stroke-width="0.8"/></g>
 <g><rect x="872.5" y="438.5" width="14" height="13" fill="#f2f2f2" stroke="#aaa"/><path d="M873 442.5H886M873 446.5H886M877 439V451M881.5 439V451" stroke="#bbb" stroke-width="0.8"/><rect x="879.5" y="446.5" width="15" height="12" rx="1.5" fill="#5a8ab4" stroke="#3a6a94"/><rect x="882" y="447.5" width="10" height="4" fill="#d8e6f2"/><rect x="884" y="454" width="6" height="4" fill="#d8e6f2"/></g>
 <g><rect x="906.5" y="438.5" width="14" height="13" fill="#f2f2f2" stroke="#aaa"/><path d="M907 442.5H920M907 446.5H920M911 439V451M915.5 439V451" stroke="#bbb" stroke-width="0.8"/><path d="M911.5 447.5H917L918.5 449H929.5V458.5H911.5Z" fill="#8ab6d8" stroke="#5a88b0"/><path d="M917 456V452.5H914.5L920.5 448.5L926.5 452.5H924V456Z" fill="#e8f2fa" stroke="#5a88b0" stroke-width="0.6"/></g>
 <path d="M1066 442.5H1075M1066 455.5H1075M1068.5 443V455M1066.5 446L1068.5 443L1070.5 446M1066.5 452L1068.5 455L1070.5 452" fill="none" stroke="#2a4a80" stroke-width="1.1"/><path d="M1071.5 455L1075.5 444.5L1079.5 455M1073 451.5H1078" fill="none" stroke="#2a4a80" stroke-width="1.1"/>
</svg>
<div class="a" style="left:1522px;top:439px;width:18px;height:18px;border:2px solid #222;background:linear-gradient(90deg,#fff 62%,#555 62%)"></div>
<div class="a" style="left:265px;top:463px;width:1284px;height:279px;background:#fff;"></div>
<div class="a" style="left:265px;top:463px;width:928px;height:1px;background:#a8a8a8;"></div>
<div class="a" style="left:265px;top:501px;width:928px;height:1px;background:#a8a8a8;"></div>
<div class="a" style="left:265px;top:463px;width:1px;height:72px;background:#a8a8a8;"></div>
<div class="a" style="left:296px;top:463px;width:1px;height:72px;background:#a8a8a8;"></div>
<div class="a" style="left:265px;top:534px;width:32px;height:1px;background:#a8a8a8;"></div>
<div class="a" style="left:346px;top:464px;width:1px;height:37px;background:#dedede;"></div>
<div class="a" style="left:472px;top:464px;width:1px;height:37px;background:#dedede;"></div>
<div class="a" style="left:604px;top:464px;width:1px;height:37px;background:#dedede;"></div>
<div class="a" style="left:697px;top:464px;width:1px;height:37px;background:#dedede;"></div>
<div class="a" style="left:773px;top:464px;width:1px;height:37px;background:#dedede;"></div>
<div class="a" style="left:903px;top:464px;width:1px;height:37px;background:#dedede;"></div>
<div class="a" style="left:962px;top:464px;width:1px;height:37px;background:#dedede;"></div>
<div class="a" style="left:1065px;top:464px;width:1px;height:37px;background:#dedede;"></div>
<div class="a" style="left:1125px;top:464px;width:1px;height:37px;background:#dedede;"></div>
<div class="a" style="left:1192px;top:464px;width:1px;height:37px;background:#dedede;"></div>
<div class="t" style="left:308.3px;top:471.60px;font-size:23px;font-weight:400;color:#000;font-family:'Liberation Sans',sans-serif;letter-spacing:-1.406px;">id</div>
<div class="t" style="left:358.4px;top:471.60px;font-size:23px;font-weight:400;color:#000;font-family:'Liberation Sans',sans-serif;letter-spacing:0.193px;">createdAt</div>
<div class="t" style="left:483.4px;top:471.60px;font-size:23px;font-weight:400;color:#000;font-family:'Liberation Sans',sans-serif;letter-spacing:0.378px;">updatedAt</div>
<div class="t" style="left:615.5px;top:471.60px;font-size:23px;font-weight:400;color:#000;font-family:'Liberation Sans',sans-serif;letter-spacing:-0.370px;">UserId</div>
<div class="t" style="left:708px;top:471.60px;font-size:23px;font-weight:400;color:#000;font-family:'Liberation Sans',sans-serif;letter-spacing:0.702px;">desc</div>
<div class="t" style="left:784.3px;top:471.60px;font-size:23px;font-weight:400;color:#000;font-family:'Liberation Sans',sans-serif;letter-spacing:0.485px;">ingredient</div>
<div class="t" style="left:913.2px;top:471.60px;font-size:23px;font-weight:400;color:#000;font-family:'Liberation Sans',sans-serif;letter-spacing:-0.499px;">title</div>
<div class="t" style="left:972.5px;top:471.60px;font-size:23px;font-weight:400;color:#000;font-family:'Liberation Sans',sans-serif;letter-spacing:0.541px;">recipes</div>
<div class="t" style="left:1074.6px;top:471.60px;font-size:23px;font-weight:400;color:#000;font-family:'Liberation Sans',sans-serif;letter-spacing:-0.199px;">tips</div>
<div class="t" style="left:1134.5px;top:471.60px;font-size:23px;font-weight:400;color:#000;font-family:'Liberation Sans',sans-serif;letter-spacing:-0.328px;">tags</div>
<div class="a" style="left:297px;top:503px;width:28px;height:11px;background:#8a8a8a;"></div>
<div class="t" style="left:299px;top:504.80px;font-size:9px;font-weight:700;color:#fff;font-family:'Liberation Sans',sans-serif;letter-spacing:-0.333px;">NULL</div>
<div class="a" style="left:347px;top:503px;width:28px;height:11px;background:#8a8a8a;"></div>
<div class="t" style="left:349px;top:504.80px;font-size:9px;font-weight:700;color:#fff;font-family:'Liberation Sans',sans-serif;letter-spacing:-0.333px;">NULL</div>
<div class="a" style="left:473px;top:503px;width:28px;height:11px;background:#8a8a8a;"></div>
<div class="t" style="left:475px;top:504.80px;font-size:9px;font-weight:700;color:#fff;font-family:'Liberation Sans',sans-serif;letter-spacing:-0.333px;">NULL</div>
<div class="a" style="left:605px;top:503px;width:28px;height:11px;background:#8a8a8a;"></div>
<div class="t" style="left:607px;top:504.80px;font-size:9px;font-weight:700;color:#fff;font-family:'Liberation Sans',sans-serif;letter-spacing:-0.333px;">NULL</div>
<div class="a" style="left:698px;top:503px;width:28px;height:11px;background:#8a8a8a;"></div>
<div class="t" style="left:700px;top:504.80px;font-size:9px;font-weight:700;color:#fff;font-family:'Liberation Sans',sans-serif;letter-spacing:-0.333px;">NULL</div>
<div class="a" style="left:774px;top:503px;width:28px;height:11px;background:#8a8a8a;"></div>
<div class="t" style="left:776px;top:504.80px;font-size:9px;font-weight:700;color:#fff;font-family:'Liberation Sans',sans-serif;letter-spacing:-0.333px;">NULL</div>
<div class="a" style="left:904px;top:503px;width:28px;height:11px;background:#8a8a8a;"></div>
<div class="t" style="left:906px;top:504.80px;font-size:9px;font-weight:700;color:#fff;font-family:'Liberation Sans',sans-serif;letter-spacing:-0.333px;">NULL</div>
<div class="a" style="left:963px;top:503px;width:28px;height:11px;background:#8a8a8a;"></div>
<div class="t" style="left:965px;top:504.80px;font-size:9px;font-weight:700;color:#fff;font-family:'Liberation Sans',sans-serif;letter-spacing:-0.333px;">NULL</div>
<div class="a" style="left:1066px;top:503px;width:28px;height:11px;background:#8a8a8a;"></div>
<div class="t" style="left:1068px;top:504.80px;font-size:9px;font-weight:700;color:#fff;font-family:'Liberation Sans',sans-serif;letter-spacing:-0.333px;">NULL</div>
<div class="a" style="left:1126px;top:503px;width:28px;height:11px;background:#8a8a8a;"></div>
<div class="t" style="left:1128px;top:504.80px;font-size:9px;font-weight:700;color:#fff;font-family:'Liberation Sans',sans-serif;letter-spacing:-0.333px;">NULL</div>
<svg style="left:276px;top:516px" width="8" height="8" viewBox="0 0 8 8"><path d="M4 0.5V7.5M1 2.2L7 5.8M7 2.2L1 5.8" stroke="#333" stroke-width="1.6"/></svg>
<div class="a" style="left:1549px;top:434px;width:72px;height:308px;background:#e8e8ea;"></div>
<div class="a" style="left:1549px;top:434px;width:72px;height:85px;background:#0a78d4;"></div>
<svg style="left:1549px;top:467px" width="12" height="24" viewBox="0 0 12 24"><path d="M0 0L11 11.5L0 23Z" fill="#fff"/></svg>
<svg style="left:1568px;top:438px" width="37" height="38" viewBox="0 0 37 38">
 <rect x="1.5" y="1" width="33" height="35.5" rx="2.5" fill="#f4f4f4"/><rect x="4.5" y="6" width="27.5" height="27" fill="#0e3a70"/>
 <g fill="#e8e8e8"><rect x="6.5" y="8.5" width="7" height="2.4"/><rect x="15" y="8.5" width="7" height="2.4"/><rect x="23.5" y="8.5" width="7" height="2.4"/>
 <rect x="6.5" y="13.5" width="7" height="2.4"/><rect x="15" y="13.5" width="7" height="2.4"/><rect x="23.5" y="13.5" width="7" height="2.4"/>
 <rect x="6.5" y="18.5" width="7" height="2.4"/><rect x="15" y="18.5" width="7" height="2.4"/><rect x="23.5" y="18.5" width="7" height="2.4"/>
 <rect x="6.5" y="23.5" width="7" height="2.4"/><rect x="15" y="23.5" width="7" height="2.4"/><rect x="23.5" y="23.5" width="7" height="2.4"/>
 <rect x="6.5" y="28.5" width="7" height="2.4"/><rect x="15" y="28.5" width="7" height="2.4"/><rect x="23.5" y="28.5" width="7" height="2.4"/></g>
</svg>
<div class="t" style="left:1568px;top:482.80px;font-size:12px;font-weight:400;color:#fff;font-family:'Liberation Sans',sans-serif;letter-spacing:-0.403px;">Result</div>
<div class="t" style="left:1573px;top:495.00px;font-size:12px;font-weight:400;color:#fff;font-family:'Liberation Sans',sans-serif;letter-spacing:0.109px;">Grid</div>
<svg style="left:1569px;top:524px" width="34" height="37" viewBox="0 0 34 37">
 <rect x="1" y="1" width="32" height="35" rx="2.5" fill="#ededed" stroke="#dcdcdc"/><rect x="4" y="5" width="26" height="27" fill="#f6f6f6" stroke="#d8d8d8"/>
 <path d="M7 9H27M7 13H16M17 13V23H27M7 17H14M7 21H14M7 25H27M7 28H20" stroke="#d0d0d0" stroke-width="1.2" fill="none"/>
</svg>
<div class="t" style="left:1568px;top:567.00px;font-size:12px;font-weight:400;color:#555;font-family:'Liberation Sans',sans-serif;letter-spacing:0.667px;">Form</div>
<div class="t" style="left:1567px;top:580.00px;font-size:12px;font-weight:400;color:#555;font-family:'Liberation Sans',sans-serif;letter-spacing:0.328px;">Editor</div>
<svg style="left:1569px;top:609px" width="40" height="37" viewBox="0 0 40 37">
 <rect x="1" y="1" width="32" height="35" rx="2.5" fill="#ededed" stroke="#dcdcdc"/>
 <path d="M6 7H20M6 11H18M6 15H22M6 19H26M6 23H26M6 27H26M6 31H26" stroke="#d0d0d0" stroke-width="1.4"/>
 <circle cx="24" cy="9.5" r="5" fill="#f4f4f4" stroke="#d0d0d0" stroke-width="1.6"/><path d="M27.5 13L32 17.5" stroke="#d0d0d0" stroke-width="2"/>
</svg>
<div class="t" style="left:1572px;top:652.50px;font-size:12px;font-weight:400;color:#555;font-family:'Liberation Sans',sans-serif;letter-spacing:-0.004px;">Field</div>
<div class="t" style="left:1568px;top:664.00px;font-size:12px;font-weight:400;color:#555;font-family:'Liberation Sans',sans-serif;letter-spacing:-0.004px;">Types</div>
<svg style="left:1573px;top:697px" width="23" height="39" viewBox="0 0 23 39"><path d="M2 13L11.5 3L21 13" fill="none" stroke="#d8d8da" stroke-width="4"/><path d="M2 25L11.5 35L21 25" fill="none" stroke="#d8d8da" stroke-width="4"/></svg>
<div class="a" style="left:265px;top:741px;width:1356px;height:24px;background:#e6e6e8;"></div>
<div class="a" style="left:265px;top:741px;width:83px;height:24px;background:#fff;"></div>
<div class="t" style="left:274.5px;top:745.50px;font-size:14px;font-weight:400;color:#2a7fd0;font-family:'Liberation Sans',sans-serif;letter-spacing:0.143px;">posts 1</div>
<svg style="left:329.5px;top:749.5px" width="10" height="10" viewBox="0 0 10 10"><path d="M1 1L9 9M9 1L1 9" stroke="#555" stroke-width="1.2"/></svg>
<div class="a" style="left:1450px;top:743px;width:80px;height:21px;background:#d2d2d4;border:1px solid #bcbcbe"></div>
<div class="t" style="left:1474px;top:747.00px;font-size:13px;font-weight:400;color:#8a8a8a;font-family:'Liberation Sans',sans-serif;letter-spacing:-0.383px;">Apply</div>
<div class="a" style="left:1537px;top:743px;width:83px;height:21px;background:#d2d2d4;border:1px solid #bcbcbe"></div>
<div class="t" style="left:1559px;top:747.00px;font-size:13px;font-weight:400;color:#8a8a8a;font-family:'Liberation Sans',sans-serif;letter-spacing:-0.059px;">Revert</div>
<div class="a" style="left:1626px;top:133px;width:286px;height:25px;background:#e4e4e6;"></div>
<div class="t" style="left:1635px;top:138.00px;font-size:14px;font-weight:400;color:#6e6e6e;font-family:'Liberation Sans',sans-serif;letter-spacing:0.172px;">SQLAdditions</div>
<svg style="left:1723.5px;top:143px" width="184" height="6.5"><defs><pattern id="dp3" width="5" height="5" patternUnits="userSpaceOnUse"><rect x="0" y="0" width="1.4" height="1.4" fill="#8a8a8a"/><rect x="2.5" y="2.5" width="1.4" height="1.4" fill="#a4a4a4"/></pattern></defs><rect width="184" height="6.5" fill="url(#dp3)"/></svg>
<div class="a" style="left:1626px;top:158px;width:286px;height:34px;background:#f3f3f5;"></div>
<div class="a" style="left:1784px;top:163px;width:128px;height:26px;background:#fff;"></div>
<div class="t" style="left:1788px;top:170.30px;font-size:13px;font-weight:400;color:#111;font-family:'Liberation Sans',sans-serif;letter-spacing:-0.083px;">Jump to</div>
<svg style="left:1626px;top:158px" width="160" height="34" viewBox="1626 158 160 34">
 <path d="M1652 170.5V181.5L1641.5 176Z" fill="#a8a8aa"/>
 <path d="M1677.5 170.5V181.5L1688 176Z" fill="#a8a8aa"/>
 <rect x="1703" y="167" width="1" height="18" fill="#8593a8"/>
 <rect x="1712.5" y="165.5" width="21" height="21" rx="2.5" fill="#ececec" stroke="#8a8a8a"/>
 <path d="M1719 169.5H1725V171.5H1723.2V179H1725V181H1719V179H1720.8V171.5H1719Z" fill="#f6f6f6" stroke="#555" stroke-width="1"/><text x="1723.3" y="183.6" font-family="Liberation Sans" font-weight="bold" font-size="13.5" fill="#333">?</text>
 <path d="M1750 166.5H1757.5L1753 171.5H1756L1747 179.5L1749.8 173H1746.5Z" fill="#f0cc40" stroke="#b08a10" stroke-width="0.6"/>
 <path d="M1752.6 173H1758.6V175H1756.8V182H1758.6V184H1752.6V182H1754.4V175H1752.6Z" fill="#f6f6f6" stroke="#555" stroke-width="1"/><text x="1757" y="187.4" font-family="Liberation Sans" font-weight="bold" font-size="13.5" fill="#333">?</text>
 <rect x="1778" y="167" width="1" height="18" fill="#8593a8"/>
</svg>
<div class="a" style="left:1626px;top:192px;width:286px;height:550px;background:#fff;"></div>
<div class="a" style="left:1626px;top:192px;width:286px;height:150px;overflow:hidden"><div style="position:absolute;left:0;top:0;width:312px;height:150px"><div style="position:absolute;left:0;width:312px;text-align:center;top:17.07px;line-height:20px;font-size:20px;font-weight:700;color:#7c7c7c;letter-spacing:0.8px;white-space:nowrap">Automatic context help is</div><div style="position:absolute;left:0;width:312px;text-align:center;top:40.72px;line-height:20px;font-size:20px;font-weight:700;color:#7c7c7c;letter-spacing:0.8px;white-space:nowrap">disabled. Use the toolbar to</div><div style="position:absolute;left:0;width:312px;text-align:center;top:64.37px;line-height:20px;font-size:20px;font-weight:700;color:#7c7c7c;letter-spacing:0.8px;white-space:nowrap">manually get help for the</div><div style="position:absolute;left:0;width:312px;text-align:center;top:88.02px;line-height:20px;font-size:20px;font-weight:700;color:#7c7c7c;letter-spacing:0.8px;white-space:nowrap">current caret position or to</div><div style="position:absolute;left:0;width:312px;text-align:center;top:111.67px;line-height:20px;font-size:20px;font-weight:700;color:#7c7c7c;letter-spacing:0.8px;white-space:nowrap">toggle automatic help.</div></div></div>
<div class="a" style="left:1626px;top:741px;width:286px;height:24px;background:#e6e6e8;"></div>
<div class="a" style="left:1626px;top:741px;width:101px;height:24px;background:#fff;"></div>
<div class="t" style="left:1635.5px;top:745.50px;font-size:14px;font-weight:400;color:#2a7fd0;font-family:'Liberation Sans',sans-serif;letter-spacing:0.006px;">Context Help</div>
<div class="t" style="left:1736.6px;top:745.50px;font-size:14px;font-weight:400;color:#222;font-family:'Liberation Sans',sans-serif;letter-spacing:-0.155px;">Snippets</div>
<div class="a" style="left:265px;top:773px;width:1647px;height:25px;background:#e4e4e6;"></div>
<div class="t" style="left:274px;top:779.00px;font-size:14px;font-weight:400;color:#6e6e6e;font-family:'Liberation Sans',sans-serif;letter-spacing:-0.206px;">Output</div>
<svg style="left:320.5px;top:783px" width="1586" height="6.5"><defs><pattern id="dp4" width="5" height="5" patternUnits="userSpaceOnUse"><rect x="0" y="0" width="1.4" height="1.4" fill="#8a8a8a"/><rect x="2.5" y="2.5" width="1.4" height="1.4" fill="#a4a4a4"/></pattern></defs><rect width="1586" height="6.5" fill="url(#dp4)"/></svg>
<div class="a" style="left:265px;top:798px;width:1647px;height:35px;background:#f3f3f5;"></div>
<svg style="left:274px;top:806px" width="19" height="20" viewBox="0 0 19 20"><rect x="1.5" y="7.5" width="10" height="11" fill="#fff" stroke="#333" stroke-width="1.3"/><path d="M4.5 6V4.5H14V15.5H13M7.5 3V1.5H17V12.5H16" fill="none" stroke="#333" stroke-width="1.3"/></svg>
<div class="a" style="left:300px;top:804px;width:187px;height:26px;background:#fff;"></div>
<div class="a" style="left:472px;top:804px;width:15px;height:26px;background:#f2f2f2;"></div>
<svg style="left:475.5px;top:814.5px" width="8" height="5" viewBox="0 0 8 5"><path d="M0 0H7.5L3.75 4.5Z" fill="#111"/></svg>
<div class="t" style="left:305.5px;top:810.50px;font-size:14px;font-weight:400;color:#111;font-family:'Liberation Sans',sans-serif;letter-spacing:-0.486px;">Action Output</div>
<div class="a" style="left:265px;top:832px;width:1647px;height:169px;background:#fff;"></div>
<div class="a" style="left:292px;top:834px;width:1px;height:21px;background:#dcdcdc;"></div>
<div class="a" style="left:337px;top:834px;width:1px;height:21px;background:#dcdcdc;"></div>
<div class="a" style="left:400px;top:834px;width:1px;height:21px;background:#dcdcdc;"></div>
<div class="a" style="left:1073px;top:834px;width:1px;height:21px;background:#dcdcdc;"></div>
<div class="a" style="left:1748px;top:834px;width:1px;height:21px;background:#dcdcdc;"></div>
<div class="t" style="left:300px;top:838.80px;font-size:12px;font-weight:400;color:#222;font-family:'Liberation Sans',sans-serif;">#</div>
<div class="t" style="left:345.3px;top:838.80px;font-size:12px;font-weight:400;color:#222;font-family:'Liberation Sans',sans-serif;letter-spacing:-0.145px;">Time</div>
<div class="t" style="left:409.2px;top:838.80px;font-size:12px;font-weight:400;color:#222;font-family:'Liberation Sans',sans-serif;letter-spacing:0.228px;">Action</div>
<div class="t" style="left:1083.3px;top:838.80px;font-size:12px;font-weight:400;color:#222;font-family:'Liberation Sans',sans-serif;letter-spacing:-0.284px;">Message</div>
<div class="t" style="left:1757.8px;top:838.80px;font-size:12px;font-weight:400;color:#222;font-family:'Liberation Sans',sans-serif;letter-spacing:0.242px;">Duration / Fetch</div>
<div class="a" style="left:266px;top:856.6px;width:25px;height:27px;background:#eaf1fb;"></div>
<div class="a" style="left:293px;top:856.6px;width:43px;height:27px;background:#eaf1fb;"></div>
<div class="a" style="left:338px;top:856.6px;width:62px;height:27px;background:#eaf1fb;"></div>
<div class="a" style="left:402px;top:856.6px;width:671px;height:27px;background:#eaf1fb;"></div>
<div class="a" style="left:1075px;top:856.6px;width:673px;height:27px;background:#eaf1fb;"></div>
<div class="a" style="left:1750px;top:856.6px;width:139px;height:27px;background:#eaf1fb;"></div>
<svg style="left:270.5px;top:861.70px" width="15" height="15" viewBox="0 0 15 15"><circle cx="7.5" cy="7.5" r="6.8" fill="#18a028" stroke="#0b6e16" stroke-width="1"/><path d="M4.2 7.6L6.6 10L10.8 5.4" fill="none" stroke="#fff" stroke-width="2"/></svg>
<div class="t" style="left:323.6px;top:860.20px;font-size:14px;font-weight:400;color:#111;font-family:'Liberation Sans',sans-serif;">8</div>
<div class="t" style="left:341.7px;top:860.20px;font-size:14px;font-weight:400;color:#111;font-family:'Liberation Sans',sans-serif;letter-spacing:-0.414px;">16:16:36</div>
<div class="t" style="left:405.3px;top:860.20px;font-size:14px;font-weight:400;color:#111;font-family:'Liberation Sans',sans-serif;letter-spacing:-0.367px;">SELECT * FROM `recipe.io`.posts LIMIT 0, 1000</div>
<div class="t" style="left:1078.8px;top:860.20px;font-size:14px;font-weight:400;color:#111;font-family:'Liberation Sans',sans-serif;letter-spacing:-0.562px;white-space:pre">0 row(s) returned</div>
<div class="t" style="left:1753.4px;top:860.20px;font-size:14px;font-weight:400;color:#111;font-family:'Liberation Sans',sans-serif;letter-spacing:-0.115px;">0.000 sec / 0.000 sec</div>
<svg style="left:270.5px;top:890.45px" width="15" height="15" viewBox="0 0 15 15"><circle cx="7.5" cy="7.5" r="6.8" fill="#18a028" stroke="#0b6e16" stroke-width="1"/><path d="M4.2 7.6L6.6 10L10.8 5.4" fill="none" stroke="#fff" stroke-width="2"/></svg>
<div class="t" style="left:323.6px;top:888.95px;font-size:14px;font-weight:400;color:#111;font-family:'Liberation Sans',sans-serif;">9</div>
<div class="t" style="left:341.7px;top:888.95px;font-size:14px;font-weight:400;color:#111;font-family:'Liberation Sans',sans-serif;letter-spacing:-0.414px;">16:16:38</div>
<div class="t" style="left:405.3px;top:888.95px;font-size:14px;font-weight:400;color:#111;font-family:'Liberation Sans',sans-serif;letter-spacing:-0.367px;">SELECT * FROM `recipe.io`.posts LIMIT 0, 1000</div>
<div class="t" style="left:1078.8px;top:888.95px;font-size:14px;font-weight:400;color:#111;font-family:'Liberation Sans',sans-serif;letter-spacing:-0.562px;white-space:pre">0 row(s) returned</div>
<div class="t" style="left:1753.4px;top:888.95px;font-size:14px;font-weight:400;color:#111;font-family:'Liberation Sans',sans-serif;letter-spacing:-0.115px;">0.000 sec / 0.000 sec</div>
<div class="a" style="left:266px;top:914.1px;width:25px;height:27px;background:#eaf1fb;"></div>
<div class="a" style="left:293px;top:914.1px;width:43px;height:27px;background:#eaf1fb;"></div>
<div class="a" style="left:338px;top:914.1px;width:62px;height:27px;background:#eaf1fb;"></div>
<div class="a" style="left:402px;top:914.1px;width:671px;height:27px;background:#eaf1fb;"></div>
<div class="a" style="left:1075px;top:914.1px;width:673px;height:27px;background:#eaf1fb;"></div>
<div class="a" style="left:1750px;top:914.1px;width:139px;height:27px;background:#eaf1fb;"></div>
<svg style="left:270.5px;top:919.20px" width="15" height="15" viewBox="0 0 15 15"><circle cx="7.5" cy="7.5" r="6.8" fill="#18a028" stroke="#0b6e16" stroke-width="1"/><path d="M4.2 7.6L6.6 10L10.8 5.4" fill="none" stroke="#fff" stroke-width="2"/></svg>
<div class="t" style="left:316.4px;top:917.70px;font-size:14px;font-weight:400;color:#111;font-family:'Liberation Sans',sans-serif;letter-spacing:-0.978px;">10</div>
<div class="t" style="left:341.7px;top:917.70px;font-size:14px;font-weight:400;color:#111;font-family:'Liberation Sans',sans-serif;letter-spacing:-0.414px;">16:24:01</div>
<div class="t" style="left:405.3px;top:917.70px;font-size:14px;font-weight:400;color:#111;font-family:'Liberation Sans',sans-serif;letter-spacing:-0.367px;">SELECT * FROM `recipe.io`.posts LIMIT 0, 1000</div>
<div class="t" style="left:1078.8px;top:917.70px;font-size:14px;font-weight:400;color:#111;font-family:'Liberation Sans',sans-serif;letter-spacing:-0.562px;white-space:pre">0 row(s) returned</div>
<div class="t" style="left:1753.4px;top:917.70px;font-size:14px;font-weight:400;color:#111;font-family:'Liberation Sans',sans-serif;letter-spacing:-0.115px;">0.000 sec / 0.000 sec</div>
<svg style="left:270.5px;top:947.95px" width="15" height="15" viewBox="0 0 15 15"><circle cx="7.5" cy="7.5" r="6.8" fill="#18a028" stroke="#0b6e16" stroke-width="1"/><path d="M4.2 7.6L6.6 10L10.8 5.4" fill="none" stroke="#fff" stroke-width="2"/></svg>
<div class="t" style="left:316.4px;top:946.45px;font-size:14px;font-weight:400;color:#111;font-family:'Liberation Sans',sans-serif;letter-spacing:0.053px;">11</div>
<div class="t" style="left:341.7px;top:946.45px;font-size:14px;font-weight:400;color:#111;font-family:'Liberation Sans',sans-serif;letter-spacing:-0.414px;">16:27:50</div>
<div class="t" style="left:405.3px;top:946.45px;font-size:14px;font-weight:400;color:#111;font-family:'Liberation Sans',sans-serif;letter-spacing:-0.287px;">ALTER TABLE posts DROP COLUMN content</div>
<div class="t" style="left:1078.8px;top:946.45px;font-size:14px;font-weight:400;color:#111;font-family:'Liberation Sans',sans-serif;letter-spacing:-0.268px;white-space:pre">0 row(s) affected Records: 0  Duplicates: 0  Warnings: 0</div>
<div class="t" style="left:1753.4px;top:946.45px;font-size:14px;font-weight:400;color:#111;font-family:'Liberation Sans',sans-serif;letter-spacing:-0.315px;">0.171 sec</div>
<div class="a" style="left:266px;top:971.6px;width:25px;height:27px;background:#eaf1fb;"></div>
<div class="a" style="left:293px;top:971.6px;width:43px;height:27px;background:#eaf1fb;"></div>
<div class="a" style="left:338px;top:971.6px;width:62px;height:27px;background:#eaf1fb;"></div>
<div class="a" style="left:402px;top:971.6px;width:671px;height:27px;background:#eaf1fb;"></div>
<div class="a" style="left:1075px;top:971.6px;width:673px;height:27px;background:#eaf1fb;"></div>
<div class="a" style="left:1750px;top:971.6px;width:139px;height:27px;background:#eaf1fb;"></div>
<svg style="left:270.5px;top:976.70px" width="15" height="15" viewBox="0 0 15 15"><circle cx="7.5" cy="7.5" r="6.8" fill="#18a028" stroke="#0b6e16" stroke-width="1"/><path d="M4.2 7.6L6.6 10L10.8 5.4" fill="none" stroke="#fff" stroke-width="2"/></svg>
<div class="t" style="left:316.4px;top:975.20px;font-size:14px;font-weight:400;color:#111;font-family:'Liberation Sans',sans-serif;letter-spacing:-0.978px;">12</div>
<div class="t" style="left:341.7px;top:975.20px;font-size:14px;font-weight:400;color:#111;font-family:'Liberation Sans',sans-serif;letter-spacing:-0.414px;">16:27:54</div>
<div class="t" style="left:405.3px;top:975.20px;font-size:14px;font-weight:400;color:#111;font-family:'Liberation Sans',sans-serif;letter-spacing:-0.367px;">SELECT * FROM `recipe.io`.posts LIMIT 0, 1000</div>
<div class="t" style="left:1078.8px;top:975.20px;font-size:14px;font-weight:400;color:#111;font-family:'Liberation Sans',sans-serif;letter-spacing:-0.562px;white-space:pre">0 row(s) returned</div>
<div class="t" style="left:1753.4px;top:975.20px;font-size:14px;font-weight:400;color:#111;font-family:'Liberation Sans',sans-serif;letter-spacing:-0.115px;">0.016 sec / 0.000 sec</div>
<div class="a" style="left:1890px;top:832px;width:22px;height:169px;background:#fcfcfc;"></div>
<div class="a" style="left:1894px;top:930px;width:17px;height:71px;background:#cdcdcd;"></div>
<svg style="left:1895px;top:839px" width="12" height="8" viewBox="0 0 12 8"><path d="M1.5 6.5L6 2L10.5 6.5" fill="none" stroke="#555" stroke-width="1.6"/></svg>
</body></html>
